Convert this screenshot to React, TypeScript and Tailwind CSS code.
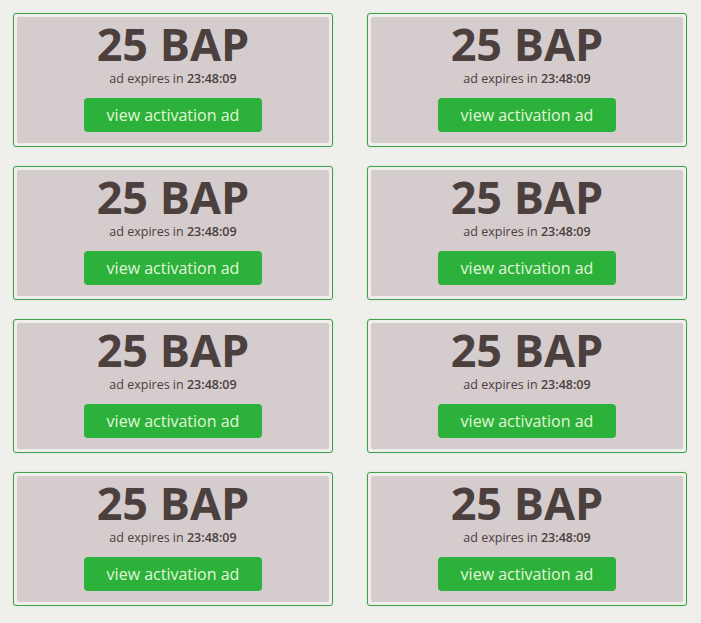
const ads = Array.from({ length: 8 }, (_, i) => ({
  id: i,
  amount: "25 BAP",
  expires: "23:48:09",
}))

function AdCard({ amount, expires }: { amount: string; expires: string }) {
  return (
    <div className="h-[134px] rounded-[3px] border border-[#3f9f4a] bg-[#efeeea] p-[3px] shadow-[0_0_2px_#c4e8c4]">
      <div className="flex h-full flex-col items-center rounded-[2px] bg-[#d5cccd]">
        <div className="text-[45px] font-bold leading-[54px] text-[#4b403e]">{amount}</div>
        <div className="text-[12.5px] leading-4 text-[#4b403e]">
          ad expires in <span className="font-semibold">{expires}</span>
        </div>
        <button className="mt-[11px] h-[34px] w-[178px] rounded-[4px] bg-[#2cb13b] text-[16px] text-[#e2f6d8]">
          view activation ad
        </button>
      </div>
    </div>
  )
}

export default function App() {
  return (
    <div className="min-h-[623px] bg-[#efefec] pt-[13px] pl-[13px] pr-[14px] font-['Open_Sans',sans-serif]">
      <div className="grid grid-cols-[320px_320px] gap-x-[34px] gap-y-[19px]">
        {ads.map((ad) => (
          <AdCard key={ad.id} amount={ad.amount} expires={ad.expires} />
        ))}
      </div>
    </div>
  )
}
